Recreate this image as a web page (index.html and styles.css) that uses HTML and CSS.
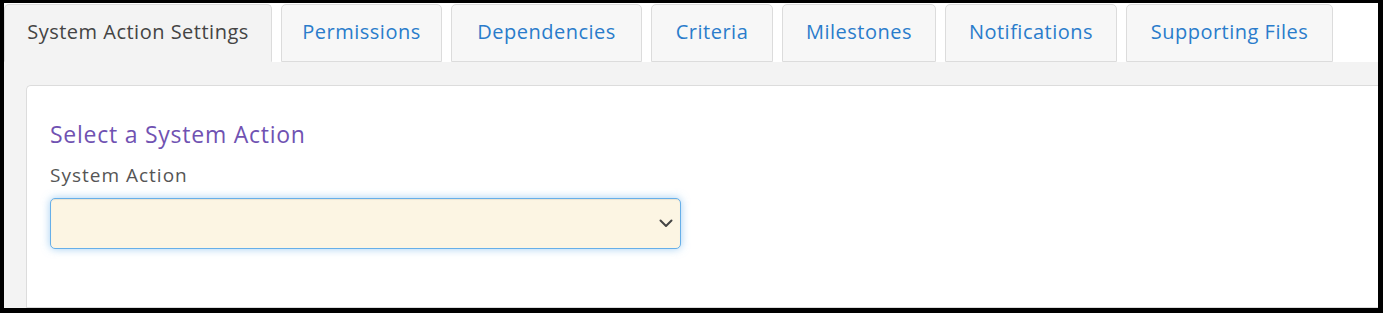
FILE: index.html
```html
<!DOCTYPE html>
<html lang="en">
<head>
<meta charset="utf-8">
<title>System Action Settings</title>
<link rel="stylesheet" href="styles.css">
</head>
<body>
<div class="frame">
  <ul class="tabs">
    <li class="tab active tab-settings">System Action Settings</li>
    <li class="tab tab-permissions">Permissions</li>
    <li class="tab tab-dependencies">Dependencies</li>
    <li class="tab tab-criteria">Criteria</li>
    <li class="tab tab-milestones">Milestones</li>
    <li class="tab tab-notifications">Notifications</li>
    <li class="tab tab-files">Supporting Files</li>
  </ul>
  <div class="pane">
    <div class="card">
      <h3 class="card-title">Select a System Action</h3>
      <label class="field-label">System Action</label>
      <div class="select" role="combobox" aria-label="System Action">
        <svg class="chevron" width="14" height="9" viewBox="0 0 14 9" aria-hidden="true">
          <path d="M1.5 1.5 L7 7 L12.5 1.5" fill="none" stroke="#444" stroke-width="2" stroke-linecap="round" stroke-linejoin="round"/>
        </svg>
      </div>
    </div>
  </div>
</div>
</body>
</html>
```

FILE: styles.css
```css
html, body {
  margin: 0;
  padding: 0;
  background: #000;
}

body {
  font-family: "Open Sans", "Noto Sans", sans-serif;
}

.frame {
  margin: 3px 5px 5px 4px;
  height: 305px;
  background: #fff;
  overflow: hidden;
  display: flex;
  flex-direction: column;
}

.tabs {
  list-style: none;
  margin: 0;
  padding: 1px 0 0 0;
  display: flex;
  gap: 9px;
}

.tab {
  box-sizing: border-box;
  height: 58px;
  padding: 0 0 3px 0;
  display: flex;
  align-items: center;
  justify-content: center;
  flex: none;
  background: #f7f7f7;
  border: 1px solid #dcdcdc;
  border-radius: 5px 5px 0 0;
  color: #2a7ccb;
  font-size: 20px;
  letter-spacing: 0.5px;
  white-space: nowrap;
}

.tab-settings { width: 268px; }
.tab-permissions { width: 161px; }
.tab-dependencies { width: 191px; }
.tab-criteria { width: 122px; }
.tab-milestones { width: 154px; }
.tab-notifications { width: 172px; }
.tab-files { width: 207px; }

.tab.active {
  background: #f3f3f3;
  border-bottom-color: #f3f3f3;
  color: #444;
}

.pane {
  flex: 1;
  background: #f3f3f3;
  padding: 23px 0 0 22px;
  display: flex;
}

.card {
  flex: 1;
  background: #fff;
  border: 1px solid #dcdcdc;
  border-right: none;
  border-radius: 5px 0 0 0;
  padding: 0 23px;
}

.card-title {
  margin: 33px 0 0 0;
  font-weight: 400;
  font-size: 23px;
  letter-spacing: 0.75px;
  line-height: 30px;
  color: #7052b2;
}

.field-label {
  display: block;
  margin-top: 14px;
  font-size: 19px;
  letter-spacing: 1px;
  line-height: 24px;
  color: #555;
}

.select {
  box-sizing: border-box;
  margin-top: 11px;
  width: 631px;
  height: 51px;
  background: #fcf5e3;
  border: 1px solid #66afe9;
  border-radius: 5px;
  box-shadow: inset 0 1px 1px rgba(0, 0, 0, 0.075), 0 0 8px rgba(102, 175, 233, 0.6);
  display: flex;
  align-items: center;
  justify-content: flex-end;
  padding-right: 7px;
}

.chevron {
  display: block;
}
```
